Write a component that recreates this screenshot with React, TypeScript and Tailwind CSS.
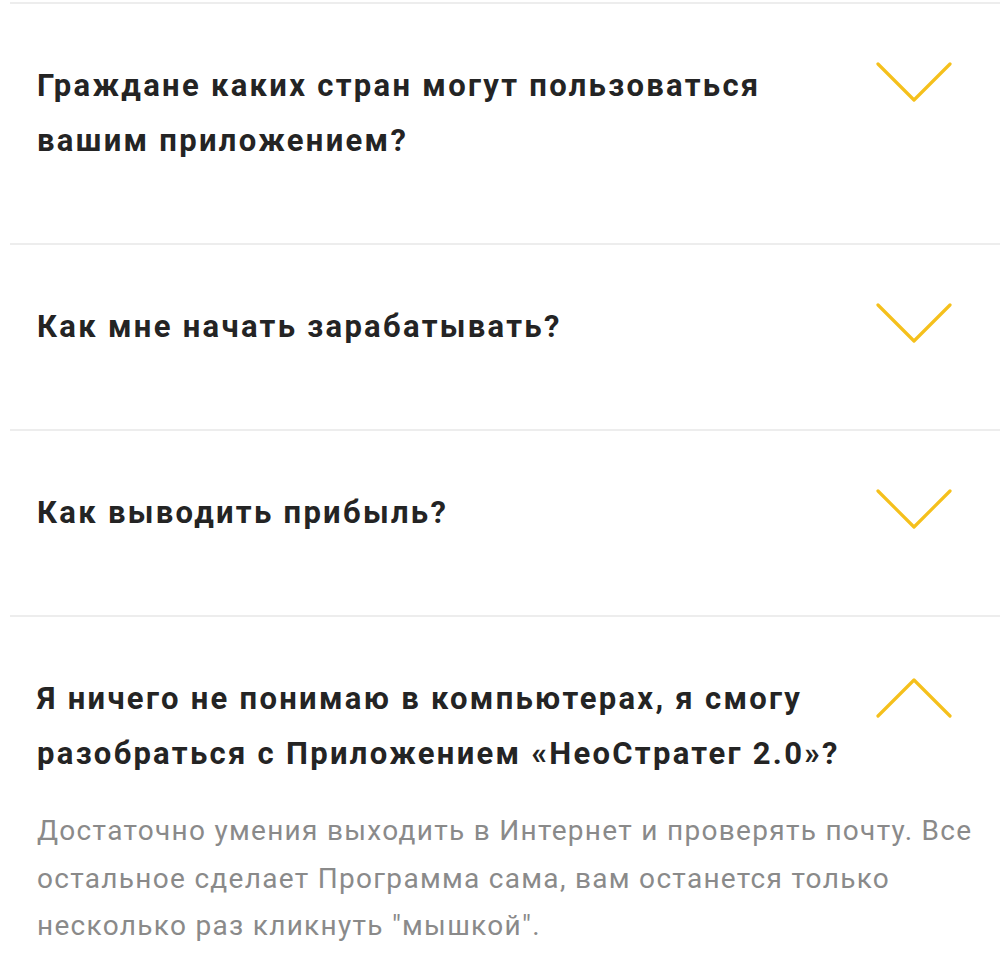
import React, { useState } from 'react';

interface FaqItem {
    question: string;
    answer: string;
}

const items: FaqItem[] = [
    {
        question: 'Граждане каких стран могут пользоваться вашим приложением?',
        answer: '',
    },
    {
        question: 'Как мне начать зарабатывать?',
        answer: '',
    },
    {
        question: 'Как выводить прибыль?',
        answer: '',
    },
    {
        question: 'Я ничего не понимаю в компьютерах, я смогу разобраться с Приложением «НеоСтратег 2.0»?',
        answer: 'Достаточно умения выходить в Интернет и проверять почту. Все остальное сделает Программа сама, вам останется только несколько раз кликнуть "мышкой".',
    },
];

const Chevron: React.FC<{ open: boolean }> = ({ open }) => (
    <svg width="76" height="42" viewBox="0 0 76 42" fill="none" className={open ? 'rotate-180' : ''}>
        <polyline points="2,2 38,38 74,2" stroke="#f5c01c" strokeWidth={3.2} strokeLinecap="round" strokeLinejoin="round" />
    </svg>
);

const App: React.FC = () => {
    const [openIndex, setOpenIndex] = useState<number>(3);

    return (
        <div className="w-[1000px] h-[967px] overflow-hidden bg-white pt-[2px] pl-[10px]" style={{ fontFamily: 'Roboto, "Liberation Sans", sans-serif' }}>
            {items.map((item, i) => {
                const open = openIndex === i;
                return (
                    <div key={i} className="border-t-2 border-[#ededed] pl-[27px] pr-[50px] pt-[54px] pb-[75px]">
                        <div className="flex justify-between items-start cursor-pointer" onClick={() => setOpenIndex(open ? -1 : i)}>
                            <h2 className="w-[810px] text-[31px] leading-[55px] font-bold tracking-[2.3px] text-[#242424]">{item.question}</h2>
                            <div className={open ? 'mt-[5px] mr-[-2px]' : 'mt-[4px] mr-[-2px]'}>
                                <Chevron open={open} />
                            </div>
                        </div>
                        {open && item.answer && (
                            <p className="mt-[26px] mr-[-40px] text-[28px] leading-[47.5px] tracking-[1.3px] text-[#8a8a8a]">{item.answer}</p>
                        )}
                    </div>
                );
            })}
        </div>
    );
};

export default App;
